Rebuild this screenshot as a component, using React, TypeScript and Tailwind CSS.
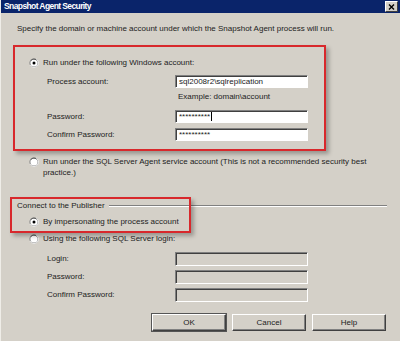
import React from "react";

function Radio({ checked }: { checked?: boolean }) {
  return (
    <svg width="10" height="10" viewBox="0 0 12 12" className="shrink-0">
      <circle cx="6" cy="6" r="5.5" fill="#808080" />
      <path d="M1.2 8.5 A5.5 5.5 0 0 0 10.8 8.5 A5.5 5.5 0 0 0 8.5 1.2" fill="none" stroke="#fff" strokeWidth="1" />
      <circle cx="6" cy="6" r="4.3" fill="#fff" />
      <path d="M2.6 3 A4.3 4.3 0 0 1 9 2.6" fill="none" stroke="#404040" strokeWidth="0.9" />
      {checked && <circle cx="6" cy="6" r="1.8" fill="#000" />}
    </svg>
  );
}

function Field({ value, disabled, caret }: { value?: string; disabled?: boolean; caret?: boolean }) {
  return (
    <div
      className={`ml-[128px] w-[133px] h-full flex items-center pl-[3px] border border-t-[#808080] border-l-[#808080] border-r-white border-b-white shadow-[inset_1px_1px_0_#404040] ${
        disabled ? "bg-[#d4d0c8]" : "bg-white"
      }`}
    >
      <span className="leading-none">{value}</span>
      {caret && <span className="w-px h-[9px] bg-black ml-px" />}
    </div>
  );
}

function Btn({ label, def }: { label: string; def?: boolean }) {
  return (
    <div
      className={`w-[74px] h-[17px] flex items-center justify-center bg-[#d4d0c8] border border-t-white border-l-white border-r-[#404040] border-b-[#404040] shadow-[inset_-1px_-1px_0_#808080] ${
        def ? "outline outline-1 outline-[#555]" : ""
      }`}
    >
      {label}
    </div>
  );
}

export default function App() {
  return (
    <div
      className="relative w-[400px] h-[341px] bg-[#d4d0c8] overflow-hidden text-[8px] text-[#222] border-l border-[#efede8]"
      style={{ fontFamily: '"Liberation Sans", Arial, sans-serif' }}
    >
      {/* Title bar */}
      <div className="h-[13px] bg-[#0a246a] flex items-center justify-between pl-[3px] pr-[2px]">
        <span className="text-white font-bold text-[8.5px] tracking-[-0.6px] leading-none">Snapshot Agent Security</span>
        <div className="w-[13px] h-[11px] bg-[#d4d0c8] border border-t-white border-l-white border-r-[#404040] border-b-[#404040] flex items-center justify-center">
          <svg width="7" height="6" viewBox="0 0 7 6">
            <path d="M1 0.5 L6 5.5 M6 0.5 L1 5.5" stroke="#000" strokeWidth="1.4" />
          </svg>
        </div>
      </div>

      <div className="flex flex-col">
        <div className="mt-[11px] h-[10px] pl-[16px] flex items-center">
          Specify the domain or machine account under which the Snapshot Agent process will run.
        </div>

        <div className="mt-[24px] h-[10px] pl-[28px] flex items-center gap-[4px]">
          <Radio checked />
          <span>Run under the following Windows account:</span>
        </div>

        <div className="mt-[7px] h-[13px] pl-[46px] flex items-center">
          <span className="w-0 whitespace-nowrap">Process account:</span>
          <Field value="sql2008r2\sqlreplication" />
        </div>

        <div className="mt-[4px] h-[10px] pl-[177px] flex items-center">Example: domain\account</div>

        <div className="mt-[8px] h-[13px] pl-[46px] flex items-center">
          <span className="w-0 whitespace-nowrap">Password:</span>
          <Field value="**********" caret />
        </div>

        <div className="mt-[5px] h-[13px] pl-[46px] flex items-center">
          <span className="w-0 whitespace-nowrap">Confirm Password:</span>
          <Field value="**********" />
        </div>

        <div className="mt-[15px] pl-[28px] flex gap-[4px] leading-[11px]">
          <div className="pt-[1px]">
            <Radio />
          </div>
          <span className="w-[330px]">
            Run under the SQL Server Agent service account (This is not a recommended security best practice.)
          </span>
        </div>

        <div className="mt-[23px] h-[10px] pl-[16px] pr-[13px] flex items-center gap-[4px]">
          <span className="whitespace-nowrap">Connect to the Publisher</span>
          <div className="flex-1 h-[2px] border-t border-[#808080] border-b border-b-white" />
        </div>

        <div className="mt-[6px] h-[10px] pl-[28px] flex items-center gap-[4px]">
          <Radio checked />
          <span>By impersonating the process account</span>
        </div>

        <div className="mt-[7px] h-[10px] pl-[28px] flex items-center gap-[4px]">
          <Radio />
          <span>Using the following SQL Server login:</span>
        </div>

        <div className="mt-[8px] h-[14px] pl-[46px] flex items-center">
          <span className="w-0 whitespace-nowrap">Login:</span>
          <Field disabled />
        </div>
        <div className="mt-[4px] h-[14px] pl-[46px] flex items-center">
          <span className="w-0 whitespace-nowrap">Password:</span>
          <Field disabled />
        </div>
        <div className="mt-[4px] h-[14px] pl-[46px] flex items-center">
          <span className="w-0 whitespace-nowrap">Confirm Password:</span>
          <Field disabled />
        </div>

        <div className="mt-[12px] pl-[151px] flex gap-[6px]">
          <Btn label="OK" def />
          <Btn label="Cancel" />
          <Btn label="Help" />
        </div>
      </div>

      {/* red annotation boxes */}
      <div className="absolute left-[12px] top-[45px] w-[313px] h-[106px] border-2 border-[#d8282c] shadow-[3px_3px_4px_rgba(0,0,0,0.28)]" />
      <div className="absolute left-[9px] top-[197px] w-[181px] h-[36px] border-2 border-[#d8282c] shadow-[3px_3px_4px_rgba(0,0,0,0.28)]" />
    </div>
  );
}
